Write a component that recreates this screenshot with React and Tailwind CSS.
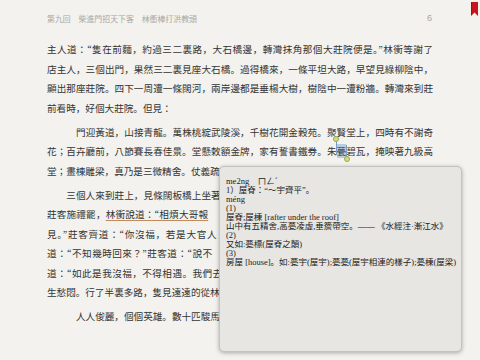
import React from 'react'

const BODY_FONT = { fontFamily: '"Noto Sans CJK JP", "Noto Sans CJK TC", sans-serif' }
const POP_FONT = { fontFamily: '"Liberation Serif", "Noto Sans CJK JP", serif' }

// one printed line of the page; full lines are spread to the measure like the reader does
function Line({ children, full = true, indent = 0 }) {
  const pad = indent === 3 ? 'pl-[29px]' : indent === 2 ? 'pl-[19.3px]' : ''
  return (
    <div
      className={`h-[19.5px] leading-[19.5px] whitespace-nowrap overflow-visible ${pad} ${
        full ? 'text-justify [text-align-last:justify]' : ''
      }`}
    >
      {children}
    </div>
  )
}

// text that sits under the dictionary popup
function Hidden({ children }) {
  return <span className="invisible">{children}</span>
}

function Selected({ children }) {
  return (
    <span className="relative bg-[#a9c3e0]/80">
      {children}
      <span className="absolute left-[-1px] top-[-3px] w-px h-[14px] bg-[#7a9cc4]" />
      <span className="absolute left-[-3.5px] top-[-8px] w-[6px] h-[6px] rounded-full bg-[#d4de7a] border border-[#9aa84a]" />
      <span className="absolute right-[-1px] top-[1px] w-px h-[14px] bg-[#7a9cc4]" />
      <span className="absolute right-[-3.5px] top-[12px] w-[6px] h-[6px] rounded-full bg-[#d4de7a] border border-[#9aa84a]" />
    </span>
  )
}

function Bookmark() {
  return (
    <svg className="absolute left-[471px] top-[2px]" width="7" height="14" viewBox="0 0 7 14">
      <path d="M0 0 H7 V14 L3.5 10.5 L0 14 Z" fill="#c4161c" />
      <path d="M0.5 0 V13" stroke="#9e0f14" strokeWidth="1" />
    </svg>
  )
}

function Popup() {
  const rows = [
    'me2ng\u3000ㄇㄥˊ',
    '1）屋脊：“～宇齊平”。',
    'méng',
    '(1)',
    '屋脊;屋棟 [rafter under the roof]',
    '山中有五精舍,高甍凌虛,垂簷帶空。—— 《水經注·漸江水》',
    '(2)',
    '又如:甍標(屋脊之顛)',
    '(3)',
    '房屋 [house]。如:甍宇(屋宇);甍甍(屋宇相連的樣子);甍棟(屋梁)',
  ]
  return (
    <div
      style={POP_FONT}
      className="absolute left-[219px] top-[166px] w-[243px] h-[186px] rounded-[5px] bg-[#e7e6e2] border border-[#c3c2be] shadow-[0_1px_4px_rgba(0,0,0,0.3)] pl-[6px] pt-[9.5px] text-[8.5px] leading-[9px] text-[#222]"
    >
      {rows.map((r, i) => (
        <div key={i} className="whitespace-nowrap">
          {r}
        </div>
      ))}
    </div>
  )
}

export default function App() {
  return (
    <div style={BODY_FONT} className="relative w-[480px] h-[360px] overflow-hidden bg-[#f3f2ee] text-[#343434]">
      <Bookmark />

      <div className="h-[38px] flex items-center pl-[47px] pr-[48px] text-[7.9px] text-[#aaa6a1]">
        <span className="flex-1">第九回　柴進門招天下客　林衝棒打洪教頭</span>
        <span className="text-[9px] font-['Liberation_Sans',sans-serif]">6</span>
      </div>

      <div className="ml-[47px] w-[386px] mt-[2px] text-[9.6px]">
        <div>
          <Line>主人道：“隻在前麵，約過三二裏路，大石橋邊，轉灣抹角那個大莊院便是。”林衝等謝了</Line>
          <Line>店主人，三個出門，果然三二裏見座大石橋。過得橋來，一條平坦大路，早望見綠柳陰中，</Line>
          <Line>顯出那座莊院。四下一周遭一條闊河，兩岸邊都是垂楊大樹，樹陰中一遭粉牆。轉灣來到莊</Line>
          <Line full={false}>前看時，好個大莊院。但見：</Line>
        </div>

        <div className="mt-[4.5px]">
          <Line indent={3}>門迎黃道，山接青龍。萬株桃綻武陵溪，千樹花開金穀苑。聚賢堂上，四時有不謝奇</Line>
          <Line>
            花；百卉廳前，八節賽長春佳景。堂懸敕額金牌，家有誓書鐵券。朱<Selected>甍</Selected>碧瓦，掩映著九級高
          </Line>
          <Line full={false}>
            堂；畫棟雕梁，真乃是三微精舍。仗義疏<Hidden>財欺卓茂，招賢納士勝田文。</Hidden>
          </Line>
        </div>

        <div className="mt-[4.5px]">
          <Line indent={2}>
            三個人來到莊上，見條闊板橋上坐著<Hidden>四五個莊客，都在那裏乘涼。三個人來到橋邊，與</Hidden>
          </Line>
          <Line>
            莊客施禮罷，
            <span className="underline decoration-[#c58a5c] underline-offset-[2px]">
              林衝說道：“相煩大哥報<Hidden>與大官人知道，京師有個犯人，送配牢城，姓林的求</Hidden>
            </span>
          </Line>
          <Line>
            見。”莊客齊道：“你沒福，若是大官人<Hidden>在家時，有酒食錢財與你，今早出獵去了。”林衝</Hidden>
          </Line>
          <Line>
            道：“不知幾時回來？”莊客道：“說不<Hidden>定，敢怕投東莊去歇，也不見得。許你不得。”林衝</Hidden>
          </Line>
          <Line>
            道：“如此是我沒福，不得相遇。我們去<Hidden>罷。”別了眾莊客，和兩個公人再回舊路，肚裏好</Hidden>
          </Line>
          <Line full={false}>
            生愁悶。行了半裏多路，隻見遠遠的從林<Hidden>子深處，一簇人馬飛奔莊上來。但見：</Hidden>
          </Line>
        </div>

        <div className="mt-[4.5px]">
          <Line indent={3} full={false}>
            人人俊麗，個個英雄。數十匹駿馬<Hidden>嘶風，兩三面繡旗弄日。</Hidden>
          </Line>
        </div>
      </div>

      <Popup />
    </div>
  )
}
